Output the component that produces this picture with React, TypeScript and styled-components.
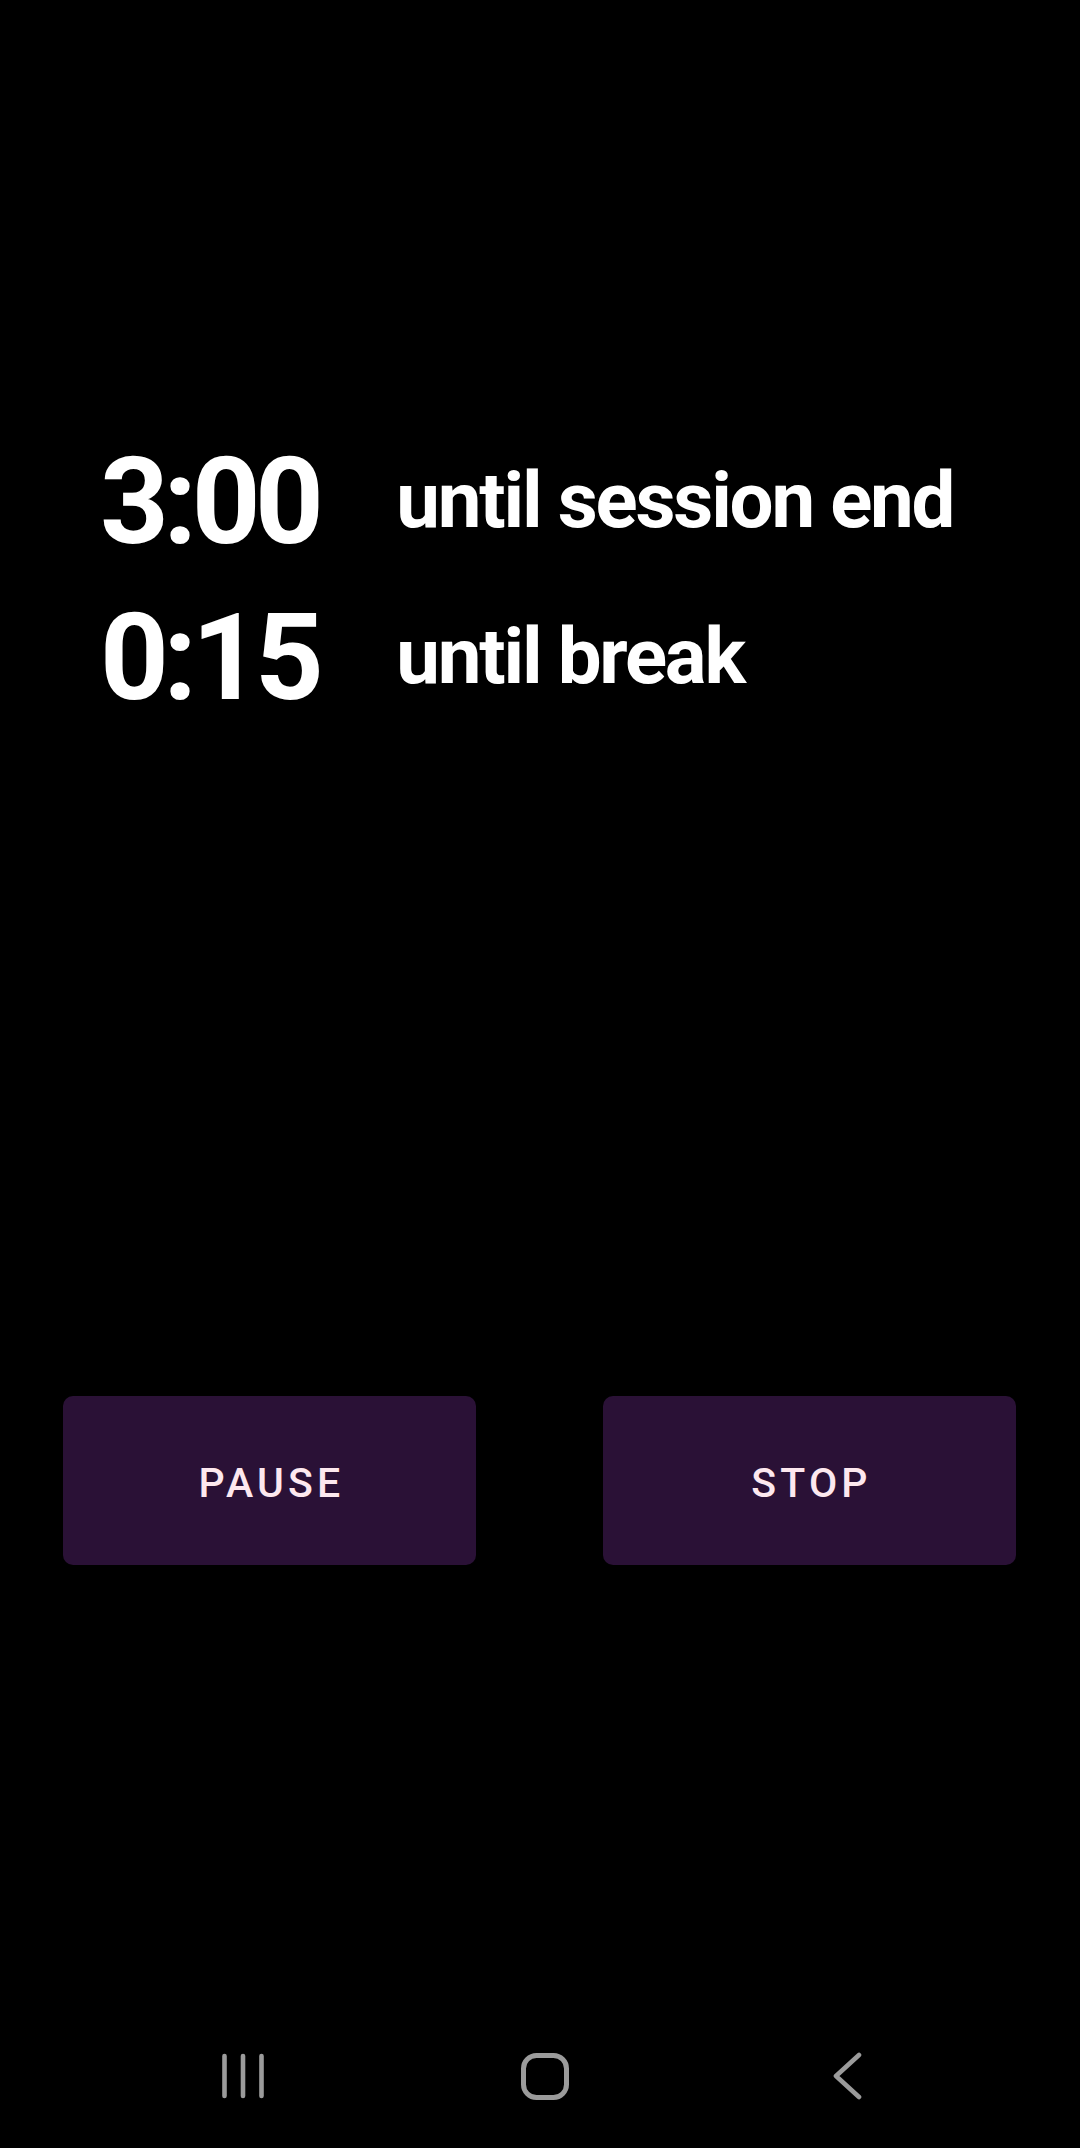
import React from "react";
import styled, { createGlobalStyle } from "styled-components";

const GlobalStyle = createGlobalStyle`
  html, body {
    margin: 0;
    padding: 0;
    background: #000;
  }
  body {
    font-family: Roboto, "Noto Sans", "Liberation Sans", sans-serif;
  }
`;

const Screen = styled.div`
  display: flex;
  flex-direction: column;
  width: 1080px;
  min-height: 100vh;
  background: #000;
  color: #fff;
  padding-top: 424px;
  box-sizing: border-box;
`;

const Timers = styled.div`
  display: grid;
  grid-template-columns: auto 1fr;
  column-gap: 78px;
  align-items: center;
  padding-left: 100px;
`;

const Time = styled.div`
  font-size: 120px;
  font-weight: 700;
  line-height: 156px;
  letter-spacing: -5.5px;
`;

const Label = styled.div`
  font-size: 78px;
  font-weight: 700;
  line-height: normal;
  letter-spacing: -2.2px;
  margin-top: -3px;
`;

const Buttons = styled.div`
  display: flex;
  gap: 127px;
  padding: 0 64px 0 63px;
  margin-top: 660px;
`;

const Button = styled.button`
  flex: 1;
  height: 169px;
  padding: 4px 0 0 4px;
  border: none;
  border-radius: 10px;
  background: #2a1136;
  color: #fde8ef;
  font-family: Roboto, "Noto Sans", sans-serif;
  font-size: 41px;
  font-weight: 500;
  letter-spacing: 4.2px;
  text-transform: uppercase;
  cursor: pointer;
`;

const NavBar = styled.nav`
  margin-top: auto;
  height: 144px;
  display: grid;
  grid-template-columns: repeat(3, 302px);
  justify-content: center;
  align-items: center;
  padding-left: 10px;
`;

const NavButton = styled.div`
  display: flex;
  justify-content: center;
  align-items: center;
`;

const navColor = "#9b9b9b";

const RecentsIcon = () => (
  <svg width="46" height="48" viewBox="0 0 46 48">
    {[4.5, 23, 41.5].map((x) => (
      <line key={x} x1={x} y1="4" x2={x} y2="44" stroke={navColor} strokeWidth="4.6" strokeLinecap="round" />
    ))}
  </svg>
);

const HomeIcon = () => (
  <svg width="50" height="49" viewBox="0 0 50 49">
    <rect x="3.5" y="3.5" width="43" height="42" rx="13" fill="none" stroke={navColor} strokeWidth="5" />
  </svg>
);

const BackIcon = () => (
  <svg width="32" height="48" viewBox="0 0 32 48">
    <polyline points="28,3 5,24 28,45" fill="none" stroke={navColor} strokeWidth="4.6" strokeLinecap="round" strokeLinejoin="round" />
  </svg>
);

export default function App() {
  return (
    <>
      <GlobalStyle />
      <Screen>
        <Timers>
          <Time>3:00</Time>
          <Label>until session end</Label>
          <Time>0:15</Time>
          <Label>until break</Label>
        </Timers>
        <Buttons>
          <Button>Pause</Button>
          <Button>Stop</Button>
        </Buttons>
        <NavBar>
          <NavButton>
            <RecentsIcon />
          </NavButton>
          <NavButton>
            <HomeIcon />
          </NavButton>
          <NavButton>
            <BackIcon />
          </NavButton>
        </NavBar>
      </Screen>
    </>
  );
}
